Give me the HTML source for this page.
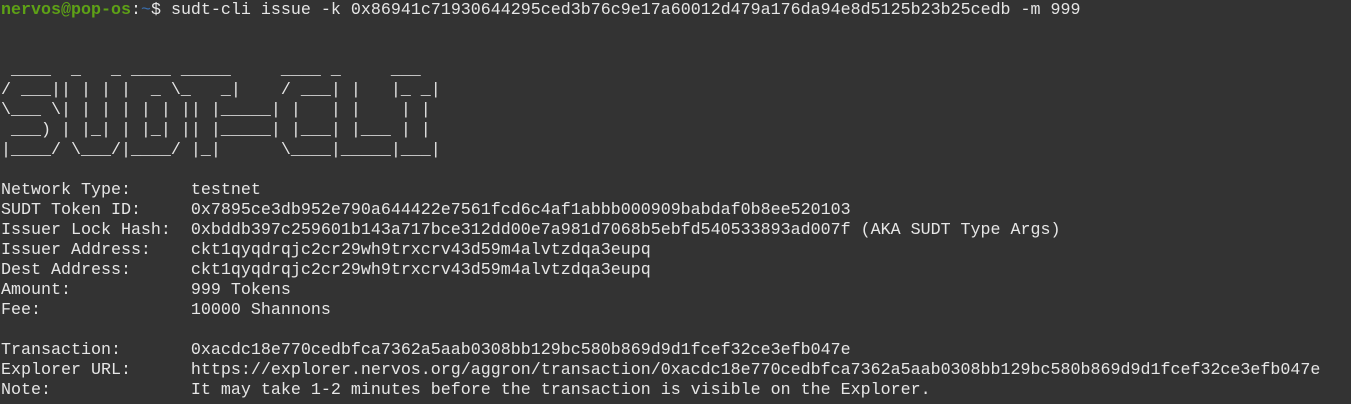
<!DOCTYPE html>
<html><head><meta charset="utf-8"><style>
html,body{margin:0;padding:0;background:#333333;width:1351px;height:404px;overflow:hidden}
pre{margin:0;padding:1px 0 0 1px;font-family:"Liberation Mono",monospace;font-size:16.67px;line-height:20px;color:#e6e6e6;white-space:pre}
.g{color:#5ea116;font-weight:bold}.b{color:#3a6fb0}
</style></head><body><pre><span class="g">nervos@pop-os</span>:<span class="b">~</span>$ sudt-cli issue -k 0x86941c71930644295ced3b76c9e17a60012d479a176da94e8d5125b23b25cedb -m 999


 ____  _   _ ____ _____     ____ _     ___
/ ___|| | | |  _ \_   _|    / ___| |   |_ _|
\___ \| | | | | | || |_____| |   | |    | |
 ___) | |_| | |_| || |_____| |___| |___ | |
|____/ \___/|____/ |_|      \____|_____|___|

Network Type:      testnet
SUDT Token ID:     0x7895ce3db952e790a644422e7561fcd6c4af1abbb000909babdaf0b8ee520103
Issuer Lock Hash:  0xbddb397c259601b143a717bce312dd00e7a981d7068b5ebfd540533893ad007f (AKA SUDT Type Args)
Issuer Address:    ckt1qyqdrqjc2cr29wh9trxcrv43d59m4alvtzdqa3eupq
Dest Address:      ckt1qyqdrqjc2cr29wh9trxcrv43d59m4alvtzdqa3eupq
Amount:            999 Tokens
Fee:               10000 Shannons

Transaction:       0xacdc18e770cedbfca7362a5aab0308bb129bc580b869d9d1fcef32ce3efb047e
Explorer URL:      https://explorer.nervos.org/aggron/transaction/0xacdc18e770cedbfca7362a5aab0308bb129bc580b869d9d1fcef32ce3efb047e
Note:              It may take 1-2 minutes before the transaction is visible on the Explorer.
</pre></body></html>
